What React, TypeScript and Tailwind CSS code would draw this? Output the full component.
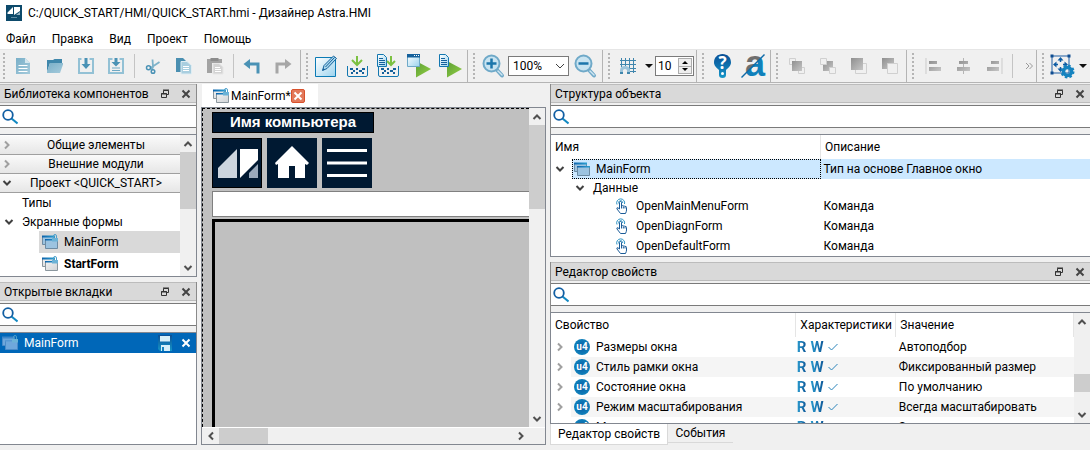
import type { ReactNode } from "react";
import clsx from "clsx";

type Dir = "up" | "down" | "left" | "right";

const chevronPaths: Record<Dir, string> = {
  up: "M1.5 7 5 3.5 8.5 7",
  down: "M1.5 3 5 6.5 8.5 3",
  left: "M7 1.5 3.5 5 7 8.5",
  right: "M3 1.5 6.5 5 3 8.5",
};

function Chevron({ dir, className }: { dir: Dir; className?: string }) {
  return (
    <svg
      viewBox="0 0 10 10"
      className={clsx("size-2.5 shrink-0 fill-none stroke-2", className ?? "stroke-[#505050]")}
    >
      <path d={chevronPaths[dir]} />
    </svg>
  );
}

/* ---------- Icons ---------- */

function Gradients() {
  return (
    <svg className="absolute size-0" aria-hidden="true">
      <defs>
        <linearGradient id="blue" x1="0" y1="0" x2="0" y2="1">
          <stop offset="0" stopColor="#0a4f96" />
          <stop offset="1" stopColor="#1596c8" />
        </linearGradient>
        <linearGradient id="sheet" x1="0" y1="0" x2="1" y2="1">
          <stop offset="0" stopColor="#ffffff" />
          <stop offset="1" stopColor="#9cd3ee" />
        </linearGradient>
        <linearGradient id="pale" x1="0" y1="0" x2="1" y2="1">
          <stop offset="0" stopColor="#79afc8" />
          <stop offset="1" stopColor="#a5cbdc" />
        </linearGradient>
        <linearGradient id="green" x1="0" y1="0" x2="1" y2="1">
          <stop offset="0" stopColor="#5c9e35" />
          <stop offset="1" stopColor="#93d044" />
        </linearGradient>
        <linearGradient id="grey" x1="0" y1="0" x2="1" y2="1">
          <stop offset="0" stopColor="#8f8f8f" />
          <stop offset="1" stopColor="#c6c6c6" />
        </linearGradient>
        <linearGradient id="pane" x1="0" y1="0" x2="1" y2="1">
          <stop offset="0" stopColor="#f2f2f2" />
          <stop offset="1" stopColor="#cfd3d6" />
        </linearGradient>
        <linearGradient id="bar" x1="0" y1="0" x2="1" y2="0">
          <stop offset="0" stopColor="#0c62ab" />
          <stop offset="1" stopColor="#2ba0d2" />
        </linearGradient>
        <linearGradient id="halves" gradientUnits="userSpaceOnUse" x1="0" y1="0" x2="24" y2="24">
          <stop offset="0.5" stopColor="#6e6e6e" />
          <stop offset="0.5" stopColor="#0f80bb" />
        </linearGradient>
      </defs>
    </svg>
  );
}

function Icon({ children }: { children: ReactNode }) {
  return (
    <svg viewBox="0 0 24 24" className="size-6 shrink-0 overflow-visible" fill="none" aria-hidden="true">
      {children}
    </svg>
  );
}

const NewIcon = () => (
  <Icon>
    <path d="M5 4h9l5 5v11H5z" fill="url(#pale)" />
    <path d="M14 4v5h5z" fill="#d4e7ef" />
    <path d="M7.500 11.500h9M7.500 14.500h9M7.500 17.500h9" stroke="#fff" />
  </Icon>
);

const OpenIcon = () => (
  <Icon>
    <path d="M5 6h6l1.500-1H20v4H8L5 18z" fill="#3f87ab" />
    <path d="M8 9h13v1.500l-3 8.500H5v-1.500z" fill="url(#pale)" />
  </Icon>
);

const SaveIcon = () => (
  <Icon>
    <path d="M8.500 5H6v14h14V5h-3.500" stroke="#93c1d5" strokeWidth="2" />
    <path d="M11.500 4h3v6h3L13 15l-4.500-5h3z" fill="#4a92b5" />
  </Icon>
);

const SaveAllIcon = () => (
  <Icon>
    <path d="M8.500 5H5v14h14V5h-3.500" stroke="#93c1d5" strokeWidth="2" />
    <path d="M10.500 4h3v4h3L12 12.500 7.500 8h3z" fill="#4a92b5" />
    <path d="M8 14h8M8 16.500h8" stroke="#6ea9c4" />
  </Icon>
);

const CutIcon = () => (
  <Icon>
    <path d="M11.500 5.500 12 13l-1.500 3M18.500 8l-9 6" stroke="#7db2c9" strokeWidth="1.800" />
    <circle cx="7.500" cy="13.800" r="2" stroke="#4a92b5" strokeWidth="1.500" />
    <circle cx="12" cy="17.500" r="1.800" stroke="#4a92b5" strokeWidth="1.500" />
  </Icon>
);

const CopyIcon = () => (
  <Icon>
    <path d="M4 4h7l4 4v10H4z" fill="#4a8fb1" />
    <path d="M9 7.500h6l4.500 4V20H9z" fill="#a9cedf" stroke="#dfedf3" />
    <path d="M11 12.500h6M11 14.500h6M11 16.500h6" stroke="#fff" />
  </Icon>
);

const PasteIcon = () => (
  <Icon>
    <path d="M4 5h15v4H9v10H4z" fill="#a3a3a3" />
    <path d="M7.500 4h8v3h-8z" fill="#8c8c8c" />
    <path d="M10 9.500h6l4 3.500v7H10z" fill="#d3d3d3" stroke="#e6e6e6" />
    <path d="M12 13.500h5M12 15.500h6M12 17.500h6" stroke="#fff" />
  </Icon>
);

const UndoIcon = () => (
  <Icon>
    <path d="M8.500 10h9.500v9.500" stroke="#4a92b5" strokeWidth="3" />
    <path d="M3.500 10 10 5v10z" fill="#4a92b5" />
  </Icon>
);

const RedoIcon = () => (
  <Icon>
    <path d="M15.500 10H6v9.500" stroke="#a6a6a6" strokeWidth="3" />
    <path d="M20.500 10 14 5v10z" fill="#a6a6a6" />
  </Icon>
);

const EditIcon = () => (
  <Icon>
    <path d="M1.500 3.500h20v19h-20z" fill="url(#sheet)" stroke="#0b7bb5" />
    <path d="M8.500 16.500 10 11.500 19.500 2l3 2.500-9.500 10z" fill="#a9d8ee" stroke="#14609b" />
    <path d="m11.500 13 9-9.500" stroke="#14609b" />
    <path d="m8.500 16.500.7-2.500 1.800 1.800z" fill="#14609b" />
  </Icon>
);

const Tray = () => (
  <>
    <path d="M2.500 12v9q0 1.500 1.500 1.500h17q1.500 0 1.500-1.500v-9" stroke="#1277b0" />
    <path
      d="M5 14h3v2H5zM17 14h3v2h-3zM8 16h2v2H8zM11 14h2v2h-2zM14 16h3v2h-3zM6 18h2v2H6zM11 18h2v2h-2zM17 18h2v2h-2z"
      fill="#14609b"
    />
  </>
);

const Sheet = () => (
  <>
    <path d="M1.500.500h6l3 3v9h-9z" fill="url(#sheet)" stroke="#1277b0" />
    <path d="M3 4.500h4M3 6.500h6M3 8.500h6M3 10.500h6" stroke="#14609b" />
  </>
);

const DownloadIcon = () => (
  <Icon>
    <Tray />
    <path d="M12 2v9M7 6l5 5 5-5" stroke="#7cc142" strokeWidth="2" />
  </Icon>
);

const DownloadAllIcon = () => (
  <Icon>
    <Tray />
    <Sheet />
    <path d="M15 2v9M11 7l4 4 4-4" stroke="#7cc142" strokeWidth="2" />
  </Icon>
);

const RunWindowIcon = () => (
  <Icon>
    <path d="m9 7 15 8-15 8.500z" fill="url(#green)" />
    <path d="M.500.500h12v12H.500z" fill="url(#sheet)" stroke="#6fa9c8" />
    <path d="M0 0h13v3.500H0z" fill="#14609b" />
    <path d="M7 1.500h1M9 1.500h1M11 1.500h1" stroke="#fff" />
  </Icon>
);

const RunSheetIcon = () => (
  <Icon>
    <path d="m9 7 15 8-15 8.500z" fill="url(#green)" />
    <Sheet />
  </Icon>
);

function ZoomIcon({ plus }: { plus?: boolean }) {
  return (
    <Icon>
      <path d="m16 16 5 5.500" stroke="#6fa9c8" strokeWidth="4" strokeLinecap="round" />
      <path d="m17 17 4 4" stroke="#cfe6f2" strokeWidth="1.500" strokeLinecap="round" />
      <circle cx="10.500" cy="9.500" r="8" fill="#c9e4f1" stroke="#6fa9c8" strokeWidth="2" />
      <path
        d={plus ? "M5.500 9.500h10M10.500 4.500v10" : "M5.500 9.500h10"}
        stroke="#1c76ab"
        strokeWidth="2.500"
      />
    </Icon>
  );
}

const GridIcon = () => (
  <Icon>
    <path d="M5.500 4v9M9.500 4v8M13.500 4v15M17.500 4v15M4 6.500h16M4 10.500h16M11 14.500h9M13 17.500h7" stroke="#3f86ad" />
    <path d="M5.500 19v-2.500q0-3 3.500-3t3.500 3V19" stroke="#9cc4da" strokeWidth="3" />
    <path d="M4 18h3v2H4zM11 18h3v2h-3z" fill="#3f86ad" />
  </Icon>
);

const HelpIcon = () => (
  <Icon>
    <path
      d="M12.500 0c5 0 8.500 3.500 8.500 8.500 0 3.500-3 5.500-5 7.500v5q0 3-3.500 3T9 21v-5c-2-2-5-4-5-7.500C4 3.500 7.500 0 12.500 0z"
      fill="url(#blue)"
    />
    <text x="12.500" y="15" textAnchor="middle" fill="#fff" className="font-['Open_Sans'] text-[17px] font-bold">
      ?
    </text>
    <circle cx="12.500" cy="19.500" r="1.500" fill="#fff" />
  </Icon>
);

const LetterIcon = () => (
  <Icon>
    <text
      x="14"
      y="22"
      textAnchor="middle"
      fill="url(#halves)"
      className="font-['Liberation_Sans'] text-[36px] font-bold"
    >
      a
    </text>
    <path d="M.500 23.500 23.500.500" stroke="#0f6aa8" strokeWidth="1.500" />
  </Icon>
);

const FrontIcon = () => (
  <Icon>
    <path d="M5.500 4.500h6v6h-6zM14.500 13.500h6v6h-6z" stroke="#d0d0d0" />
    <path d="M8 7h10v10H8z" fill="url(#grey)" />
  </Icon>
);

const ForwardIcon = () => (
  <Icon>
    <path d="M8 7h10v10H8z" fill="url(#grey)" />
    <path d="M5.500 4.500h6v6h-6zM14.500 13.500h6v6h-6z" fill="#f0f0f0" stroke="#d0d0d0" />
  </Icon>
);

const BackwardIcon = () => (
  <Icon>
    <path d="M9.500 9.500h11v10h-11z" stroke="#d0d0d0" />
    <path d="M5 4h12v12H5z" fill="url(#grey)" />
  </Icon>
);

const BackIcon = () => (
  <Icon>
    <path d="M5 4h12v11H5z" fill="url(#grey)" />
    <path d="M10.500 9.500h10v10h-10z" fill="#f0f0f0" stroke="#d0d0d0" />
  </Icon>
);

const AlignLeftIcon = () => (
  <Icon>
    <path d="M6 4v16" stroke="#cbcbcb" />
    <path d="M9 7h8v3H9zM9 13h12v4H9z" fill="url(#grey)" />
  </Icon>
);

const AlignCenterIcon = () => (
  <Icon>
    <path d="M12.500 4v16" stroke="#b5b5b5" />
    <path d="M8 7h9v3H8zM6 13h13v4H6z" fill="url(#grey)" />
  </Icon>
);

const AlignRightIcon = () => (
  <Icon>
    <path d="M20 4v16" stroke="#cbcbcb" />
    <path d="M9 7h8v3H9zM5 13h12v4H5z" fill="url(#grey)" />
  </Icon>
);

const TransformIcon = () => (
  <Icon>
    <path d="M2 2h17v17H2z" stroke="#1f5fa3" />
    <path d="M.500.500h3v3h-3zM17.500.500h3v3h-3zM.500 17.500h3v3h-3z" fill="#0e4c90" />
    <path d="M10.500 5v3M10.500 13v3M5 10.500h3M13 10.500h3" stroke="#0e5ca3" strokeWidth="1.500" />
    <path
      d="m7.500 6.500 3-3.500 3 3.500zM7.500 14.500l3 3.500 3-3.500zM6.500 7.500 3 10.500l3.500 3zM14.500 7.500l3.500 3-3.500 3z"
      fill="#0e5ca3"
    />
    <circle cx="17.500" cy="17.500" r="4" stroke="#1583bf" strokeWidth="3.500" />
    <circle cx="17.500" cy="17.500" r="6" stroke="#1583bf" strokeWidth="2" strokeDasharray="2.500 2.200" />
  </Icon>
);

function FormIcon({ lock, tone = "grey" }: { lock?: boolean; tone?: "grey" | "blue" | "selected" }) {
  const fill = { grey: "url(#pane)", blue: "#9cc3e0", selected: "#6ea7dc" }[tone];
  const edge = { grey: "#8b979e", blue: "#6d8ba3", selected: "#4b8bc8" }[tone];
  return (
    <svg viewBox="0 0 16 16" className="size-4 shrink-0" fill="none" aria-hidden="true">
      <path d="M.500 2.500h12v8H.500z" fill={fill} stroke={edge} />
      <path d="M0 1.500h13v2H0z" fill={tone === "selected" ? "#3d86c9" : "url(#bar)"} />
      <path d="M3.500 5.500h12v9h-12z" fill={fill} stroke={edge} />
      <path d="M3 5h13v1.500H3z" fill={tone === "selected" ? "#5798d4" : "url(#bar)"} />
      {lock && (
        <>
          <path d="M10 4h6v3.500h-6z" fill="#6bb2d6" />
          <path d="M11.500 4V2q0-1.500 1.500-1.500T14.500 2v2" stroke="#4c9fca" />
        </>
      )}
    </svg>
  );
}

function SearchIcon() {
  return (
    <svg viewBox="0 0 16 16" className="size-4 shrink-0" fill="none" aria-hidden="true">
      <path d="m9.500 9.500 6 5" stroke="#1389c2" strokeWidth="2" />
      <circle cx="6" cy="6" r="4.800" stroke="#125fa3" strokeWidth="1.800" />
    </svg>
  );
}

function CommandIcon() {
  return (
    <svg viewBox="0 0 16 16" className="size-4 shrink-0" fill="none" aria-hidden="true">
      <path d="M3 6.500a4 4 0 1 1 7.500-.500" stroke="#2b93c4" />
      <path d="M4.800 5.500a2 2 0 1 1 3.800-.500" stroke="#2b93c4" />
      <path
        d="M5.500 11V4.500q0-1 1-1t1 1V8q.8-1 1.700 0 1-.6 1.600.4 1.700-.4 1.700 1V12q0 1.500-1 3.500H6.500L3 11q-.5-1.500.8-1.300z"
        fill="#fff"
        stroke="#1b5c98"
      />
      <path d="M7.500 8v2.500M9.300 8.500v2M11 9v1.500" stroke="#1b5c98" />
    </svg>
  );
}

function FloatIcon() {
  return (
    <svg viewBox="0 0 10 10" className="size-2.5" fill="none" aria-hidden="true">
      <path d="M3.500 4V1.500h5v4H7M3 1h6" stroke="#333" />
      <path d="M1.500 4.500h5v4h-5zM1 5h6" stroke="#333" />
    </svg>
  );
}

function CrossIcon({ className }: { className: string }) {
  return (
    <svg viewBox="0 0 10 10" className={clsx("size-2.5 fill-none stroke-2", className)} aria-hidden="true">
      <path d="m1.500 1.500 7 7M8.500 1.500l-7 7" />
    </svg>
  );
}

/* ---------- Toolbar ---------- */

function ToolGroup({ children }: { children: ReactNode }) {
  return (
    <div className="flex items-center border-r border-[#b4b4b4] pr-0.5 pl-0.5 first:pl-0 last:border-r-0 last:pr-0">
      <span className="flex w-[7px] shrink-0 justify-center">
        <span className="h-[26px] border-l-2 border-dotted border-[#b5b5b5]" />
      </span>
      {children}
    </div>
  );
}

function Tool({ label, children }: { label: string; children: ReactNode }) {
  return (
    <button type="button" aria-label={label} className="flex w-[31px] shrink-0 justify-center">
      {children}
    </button>
  );
}

const Separator = () => (
  <span className="flex h-6 w-1.5 shrink-0 justify-center">
    <span className="w-px bg-[#c4c4c4]" />
  </span>
);

const Caret = () => (
  <button type="button" aria-label="Ещё" className="flex w-3 shrink-0 justify-center">
    <svg viewBox="0 0 8 4" className="h-1 w-2">
      <path d="M0 0h8L4 4z" fill="#111" />
    </svg>
  </button>
);

function Toolbar() {
  return (
    <div className="flex h-[34px] shrink-0 overflow-hidden border-t border-b border-t-[#e6e6e6] border-b-[#b4b4b4] bg-[#f0f0f0]">
      <ToolGroup>
        <Tool label="Создать"><NewIcon /></Tool>
        <Tool label="Открыть"><OpenIcon /></Tool>
        <Tool label="Сохранить"><SaveIcon /></Tool>
        <Tool label="Сохранить как"><SaveAllIcon /></Tool>
        <Separator />
        <Tool label="Вырезать"><CutIcon /></Tool>
        <Tool label="Копировать"><CopyIcon /></Tool>
        <Tool label="Вставить"><PasteIcon /></Tool>
        <Separator />
        <Tool label="Отменить"><UndoIcon /></Tool>
        <Tool label="Повторить"><RedoIcon /></Tool>
      </ToolGroup>
      <ToolGroup>
        <Tool label="Редактировать"><EditIcon /></Tool>
        <Tool label="Собрать"><DownloadIcon /></Tool>
        <Tool label="Собрать всё"><DownloadAllIcon /></Tool>
        <Tool label="Запустить форму"><RunWindowIcon /></Tool>
        <Tool label="Запустить проект"><RunSheetIcon /></Tool>
      </ToolGroup>
      <ToolGroup>
        <Tool label="Увеличить"><ZoomIcon plus /></Tool>
        <div className="relative">
          <select
            aria-label="Масштаб"
            className="block h-5 w-[61px] appearance-none border border-[#7a7a7a] bg-white pl-1 text-[12px] leading-4"
          >
            <option>100%</option>
          </select>
          <span className="pointer-events-none absolute inset-y-0 right-1 flex items-center">
            <svg viewBox="0 0 10 10" className="size-2.5 fill-none stroke-[#404040]">
              <path d="M1 3l4 4 4-4" />
            </svg>
          </span>
        </div>
        <Tool label="Уменьшить"><ZoomIcon /></Tool>
      </ToolGroup>
      <ToolGroup>
        <Tool label="Сетка"><GridIcon /></Tool>
        <Caret />
        <div className="flex h-5 w-[39px] border border-[#7a7a7a] bg-white">
          <input
            type="text"
            aria-label="Шаг сетки"
            defaultValue="10"
            className="w-[21px] pl-0.5 text-[12px] leading-4 outline-none"
          />
          <span className="m-px flex flex-1 flex-col divide-y divide-[#adadad] border border-[#adadad] bg-[#eee]">
            <button type="button" aria-label="Больше" className="flex flex-1 items-center justify-center">
              <svg viewBox="0 0 6 3" className="h-[3px] w-1.5"><path d="M0 3h6L3 0z" /></svg>
            </button>
            <button type="button" aria-label="Меньше" className="flex flex-1 items-center justify-center">
              <svg viewBox="0 0 6 3" className="h-[3px] w-1.5"><path d="M0 0h6L3 3z" /></svg>
            </button>
          </span>
        </div>
      </ToolGroup>
      <ToolGroup>
        <Tool label="Справка"><HelpIcon /></Tool>
        <Tool label="Шрифт"><LetterIcon /></Tool>
      </ToolGroup>
      <ToolGroup>
        <Tool label="На передний план"><FrontIcon /></Tool>
        <Tool label="Переместить вперёд"><ForwardIcon /></Tool>
        <Tool label="Переместить назад"><BackwardIcon /></Tool>
        <Tool label="На задний план"><BackIcon /></Tool>
      </ToolGroup>
      <ToolGroup>
        <Tool label="По левому краю"><AlignLeftIcon /></Tool>
        <Tool label="По центру"><AlignCenterIcon /></Tool>
        <Tool label="По правому краю"><AlignRightIcon /></Tool>
        <Separator />
        <button type="button" aria-label="Показать остальные" className="flex w-[19px] justify-end pr-px">
          <svg viewBox="0 0 8 8" className="size-2 fill-none stroke-[#999]">
            <path d="m1 1 3 3-3 3M4.500 1l3 3-3 3" />
          </svg>
        </button>
      </ToolGroup>
      <ToolGroup>
        <Tool label="Трансформация"><TransformIcon /></Tool>
        <Caret />
      </ToolGroup>
    </div>
  );
}

/* ---------- Panels ---------- */

function PanelTitle({ title }: { title: string }) {
  return (
    <header className="mb-0.5 flex h-[19px] items-center border-y border-[#bcbcbc] bg-[#d9d9d9]">
      <h2 className="flex-1 pl-1 text-[12px] leading-4 whitespace-nowrap">{title}</h2>
      <button type="button" aria-label="Открепить" className="flex w-[21px] justify-center">
        <FloatIcon />
      </button>
      <button type="button" aria-label="Закрыть" className="flex w-[21px] justify-center">
        <CrossIcon className="stroke-[#444]" />
      </button>
    </header>
  );
}

function Search({ label }: { label: string }) {
  return (
    <label className="mb-1.5 flex h-[23px] items-center border-y border-[#7a7a7a] bg-white pl-0.5">
      <SearchIcon />
      <input type="text" aria-label={label} className="min-w-0 flex-1 px-1 text-[12px] outline-none" />
    </label>
  );
}

function VerticalScroll({ children }: { children: ReactNode }) {
  return (
    <div className="flex w-4 shrink-0 flex-col bg-[#f0f0f0]">
      <button type="button" aria-label="Вверх" className="flex h-[17px] items-center justify-center">
        <Chevron dir="up" />
      </button>
      <div className="flex-1">{children}</div>
      <button type="button" aria-label="Вниз" className="flex h-[17px] items-center justify-center">
        <Chevron dir="down" />
      </button>
    </div>
  );
}

const sections: { title: string; open: boolean }[] = [
  { title: "Общие элементы", open: false },
  { title: "Внешние модули", open: false },
  { title: "Проект <QUICK_START>", open: true },
];

function Sidebar() {
  return (
    <aside className="flex min-h-0 flex-col">
      <section className="border-r border-[#8a8a8a]">
        <PanelTitle title="Библиотека компонентов" />
        <Search label="Поиск компонентов" />
      </section>
      <div className="mb-[5px] flex border-y border-r border-[#828790] bg-white">
        <div className="min-w-0 flex-1 py-px">
          {sections.map((s) => (
            <button
              key={s.title}
              type="button"
              aria-expanded={s.open}
              className="flex h-[19px] w-full items-center border-b border-[#9f9f9f] bg-linear-to-b from-[#fafafa] to-[#e6e6e6] pl-0.5 text-[12px] leading-4"
            >
              <Chevron
                dir={s.open ? "down" : "right"}
                className={s.open ? "stroke-[#404040]" : "stroke-[#a0a0a0]"}
              />
              <span className="flex-1">{s.title}</span>
            </button>
          ))}
          <div className="flex h-[19px] items-center pl-[22px] text-[12px] leading-4">Типы</div>
          <div className="flex h-[19px] items-center gap-2 pl-1 text-[12px] leading-4">
            <Chevron dir="down" className="stroke-[#404040]" />
            Экранные формы
          </div>
          <div className="ml-[39px] flex h-[22px] items-center gap-1.5 bg-[#d9d9d9] pl-[3px] text-[12px] leading-4">
            <FormIcon lock tone="blue" />
            MainForm
          </div>
          <div className="ml-[39px] flex h-[22px] items-center gap-1.5 pl-[3px] text-[12px] leading-4 font-bold">
            <FormIcon lock />
            StartForm
          </div>
        </div>
        <VerticalScroll>
          <div className="h-[57px] bg-[#cdcdcd]" />
        </VerticalScroll>
      </div>

      <section className="border-r border-[#8a8a8a]">
        <PanelTitle title="Открытые вкладки" />
        <Search label="Поиск вкладок" />
      </section>
      <div className="flex-1 border-y border-r border-[#828790] bg-white">
        <div className="flex h-5 items-center bg-[#0067b8] pl-0.5 text-[12px] leading-4 text-white">
          <FormIcon lock tone="selected" />
          <span className="flex-1 pl-1.5">MainForm</span>
          <button type="button" aria-label="Сохранить" className="flex w-[21px] justify-center">
            <svg viewBox="0 0 16 16" className="size-4">
              <path d="M1 0h14v16H3l-2-2z" fill="url(#blue)" />
              <path d="M3 1h10v5.500H3zM4 10h9v6H4z" fill="#d5eff9" />
              <path d="M5 12h2v4H5z" fill="#1583bf" />
            </svg>
          </button>
          <button type="button" aria-label="Закрыть" className="flex w-[21px] justify-center">
            <CrossIcon className="stroke-white" />
          </button>
        </div>
      </div>
    </aside>
  );
}

function Canvas() {
  return (
    <div className="flex min-h-0 min-w-0 flex-1 flex-col overflow-hidden border-t border-l border-dashed border-black bg-[#c0c0c0] pt-[3px] pl-[9px]">
      <div className="mb-[5px] h-[21px] w-[162px] shrink-0 border border-black bg-[#001932] text-center font-['Liberation_Sans',sans-serif] text-[15px] leading-[18px] font-bold text-white">
        Имя компьютера
      </div>
      <div className="mb-[3px] flex gap-[5px]">
        <button type="button" aria-label="Логотип" className="size-[50px] border border-black bg-[#001932]">
          <svg viewBox="0 0 48 48">
            <path d="M5 29 24 10v29H5z" fill="#ccd5de" />
            <path d="M27 10h18v11L27 39z" fill="#fff" />
            <path d="M45 25v14H36v-5z" fill="#9aa9bb" />
          </svg>
        </button>
        <button type="button" aria-label="Домой" className="size-[50px] bg-[#001932]">
          <svg viewBox="0 0 50 50">
            <path d="M25 8 42 25l-2 2-2-1v14H28V28h-6v12H11V26l-2 1-1-2z" fill="#fff" />
          </svg>
        </button>
        <button type="button" aria-label="Меню" className="size-[50px] bg-[#001932]">
          <svg viewBox="0 0 50 50">
            <path d="M5 12.500h40M5 25h40M5 37.500h40" stroke="#fff" strokeWidth="3" />
          </svg>
        </button>
      </div>
      <div className="mb-0.5 h-[26px] shrink-0 border-y border-l border-[#808080] bg-white" />
      <div className="flex-1 border-t-[3px] border-l-[3px] border-black" />
    </div>
  );
}

function Editor() {
  return (
    <main className="flex min-h-0 min-w-0 flex-col">
      <div className="flex h-[23px]">
        <div className="ml-px flex w-[116px] items-center bg-white pl-[11px] text-[12px] leading-4">
          <FormIcon lock />
          <span className="flex-1 pl-0.5">MainForm*</span>
          <button
            type="button"
            aria-label="Закрыть вкладку"
            className="mr-3.5 flex size-3.5 shrink-0 items-center justify-center rounded-xs border border-[#d9512c] bg-[#e2795b]"
          >
            <CrossIcon className="stroke-white" />
          </button>
        </div>
      </div>
      <div className="flex min-h-0 flex-1 flex-col border border-[#828790] bg-[#f0f0f0]">
        <div className="flex min-h-0 flex-1">
          <Canvas />
          <VerticalScroll>
            <div className="h-[84px] bg-[#cdcdcd]" />
          </VerticalScroll>
        </div>
        <div className="flex h-[17px] border-t border-white pr-4">
          <button type="button" aria-label="Влево" className="flex w-[17px] items-center justify-center">
            <Chevron dir="left" />
          </button>
          <div className="flex-1">
            <div className="h-full w-[49px] bg-[#cdcdcd]" />
          </div>
          <button type="button" aria-label="Вправо" className="flex w-[17px] items-center justify-center">
            <Chevron dir="right" />
          </button>
        </div>
      </div>
    </main>
  );
}

const commands = ["OpenMainMenuForm", "OpenDiagnForm", "OpenDefaultForm"];

function StructureTable() {
  return (
    <table className="w-full table-fixed border-collapse text-left text-[12px] leading-4">
      <colgroup>
        <col className="w-1/2" />
        <col className="w-1/2" />
      </colgroup>
      <thead>
        <tr className="h-6">
          <th className="border-r border-[#e5e5e5] p-0 pl-1 font-normal">Имя</th>
          <th className="p-0 pl-1 font-normal">Описание</th>
        </tr>
      </thead>
      <tbody>
        <tr className="h-5">
          <td className="p-0">
            <div className="flex h-5 items-center pl-1">
              <Chevron dir="down" className="stroke-[#404040]" />
              <div className="ml-[7px] flex h-full flex-1 items-center gap-1.5 border border-dotted border-black bg-[#cce8ff] pl-px">
                <FormIcon tone="blue" />
                MainForm
              </div>
            </div>
          </td>
          <td className="bg-[#cce8ff] p-0 pl-[3px]">Тип на основе Главное окно</td>
        </tr>
        <tr className="h-[17px]">
          <td className="p-0">
            <div className="flex items-center gap-2 pl-6">
              <Chevron dir="down" className="stroke-[#404040]" />
              Данные
            </div>
          </td>
          <td />
        </tr>
        {commands.map((name) => (
          <tr key={name} className="h-5">
            <td className="p-0">
              <div className="flex items-center gap-1.5 pl-[63px]">
                <CommandIcon />
                {name}
              </div>
            </td>
            <td className="p-0 pl-[3px]">Команда</td>
          </tr>
        ))}
      </tbody>
    </table>
  );
}

const properties: { name: string; value: string }[] = [
  { name: "Размеры окна", value: "Автоподбор" },
  { name: "Стиль рамки окна", value: "Фиксированный размер" },
  { name: "Состояние окна", value: "По умолчанию" },
  { name: "Режим масштабирования", value: "Всегда масштабировать" },
  { name: "Модальность", value: "Запрещена" },
];

function PropertyTable() {
  return (
    <table className="w-full table-fixed border-collapse text-left text-[12px] leading-4">
      <colgroup>
        <col />
        <col className="w-[100px]" />
        <col className="w-[34%]" />
      </colgroup>
      <thead>
        <tr className="h-6">
          <th className="border-r border-[#e5e5e5] p-0 pl-1 font-normal">Свойство</th>
          <th className="border-r border-[#e5e5e5] p-0 pl-1 font-normal">Характеристики</th>
          <th className="border-r border-[#e5e5e5] p-0 pl-1 font-normal">Значение</th>
        </tr>
      </thead>
      <tbody>
        {properties.map((p, i) => {
          const stripe = i % 2 === 1 && "bg-[#f5f5f5]";
          return (
            <tr key={p.name} className="h-5">
              <td className="p-0">
                <div className="flex h-5 items-center pl-1">
                  <Chevron dir="right" className="stroke-[#a0a0a0]" />
                  <div className={clsx("ml-1.5 flex h-full flex-1 items-center gap-1.5 pl-[3px]", stripe)}>
                    <span className="flex size-4 items-center justify-center rounded-full bg-radial from-[#0b5ca3] to-[#1490c5] text-[10px] leading-3 font-bold text-white">
                      u4
                    </span>
                    {p.name}
                  </div>
                </div>
              </td>
              <td className={clsx("p-0", stripe)}>
                <div className="flex items-center gap-1 pl-px text-[15px] leading-4 font-bold">
                  <span className="bg-linear-to-r from-[#2a9cd0] to-[#0e5797] bg-clip-text text-transparent">R</span>
                  <span className="bg-linear-to-r from-[#2a9cd0] to-[#0e5797] bg-clip-text text-transparent">W</span>
                  <svg viewBox="0 0 10 8" className="h-2 w-2.5 fill-none stroke-[#2a84ba]">
                    <path d="m.500 4 3 3 6-6" />
                  </svg>
                </div>
              </td>
              <td className={clsx("p-0 pl-[3px]", stripe)}>{p.value}</td>
            </tr>
          );
        })}
      </tbody>
    </table>
  );
}

function Inspector() {
  return (
    <aside className="flex min-h-0 min-w-0 flex-col">
      <section className="border-l border-[#8a8a8a]">
        <PanelTitle title="Структура объекта" />
        <Search label="Поиск по структуре" />
      </section>
      <div className="mb-[5px] border-y border-l border-[#828790] bg-white">
        <StructureTable />
      </div>

      <section className="border-l border-[#8a8a8a]">
        <PanelTitle title="Редактор свойств" />
        <Search label="Поиск свойств" />
      </section>
      <div className="flex min-h-0 flex-1 border-y border-l border-[#828790] bg-white">
        <div className="min-w-0 flex-1 overflow-hidden">
          <PropertyTable />
        </div>
        <VerticalScroll>
          <div className="mt-11 h-[18px] bg-[#cdcdcd]" />
        </VerticalScroll>
      </div>
      <div className="flex h-[21px] items-start text-[12px] leading-4" role="tablist">
        <button
          type="button"
          role="tab"
          aria-selected="true"
          className="h-[21px] w-[118px] border-x border-b border-[#d9d9d9] bg-white"
        >
          Редактор свойств
        </button>
        <button type="button" role="tab" aria-selected="false" className="h-[19px] w-[65px] border-b border-[#d9d9d9]">
          События
        </button>
      </div>
    </aside>
  );
}

const menu = ["Файл", "Правка", "Вид", "Проект", "Помощь"];

export default function App() {
  return (
    <div className="flex h-screen flex-col overflow-hidden bg-[#f0f0f0] font-['Roboto','Noto_Sans',sans-serif] text-black">
      <Gradients />
      <div className="flex h-[26px] shrink-0 items-center gap-1.5 bg-white pl-1.5">
        <svg viewBox="0 0 16 16" className="size-4">
          <path d="M0 0h16v16H0z" fill="#0d4a6b" />
          <path d="M1.500 7.500 7 2v7H1.500zM8 2h6v4L8 10z" fill="#fff" />
          <path d="M14 7v3h-4z" fill="#9db9c8" />
          <path d="M5 12.500h6" stroke="#5e8ba3" />
        </svg>
        <h1 className="text-[12px] leading-4">C:/QUICK_START/HMI/QUICK_START.hmi - Дизайнер Astra.HMI</h1>
      </div>
      <nav className="flex h-[23px] shrink-0 items-center gap-4 bg-white pt-0.5 pl-1.5 text-[12px] leading-4">
        {menu.map((item) => (
          <button key={item} type="button">
            {item}
          </button>
        ))}
      </nav>
      <Toolbar />
      <div className="grid min-h-0 flex-1 grid-cols-[197px_345fr_540fr] grid-rows-1 gap-1 pt-px pb-[5px]">
        <Sidebar />
        <Editor />
        <Inspector />
      </div>
    </div>
  );
}
